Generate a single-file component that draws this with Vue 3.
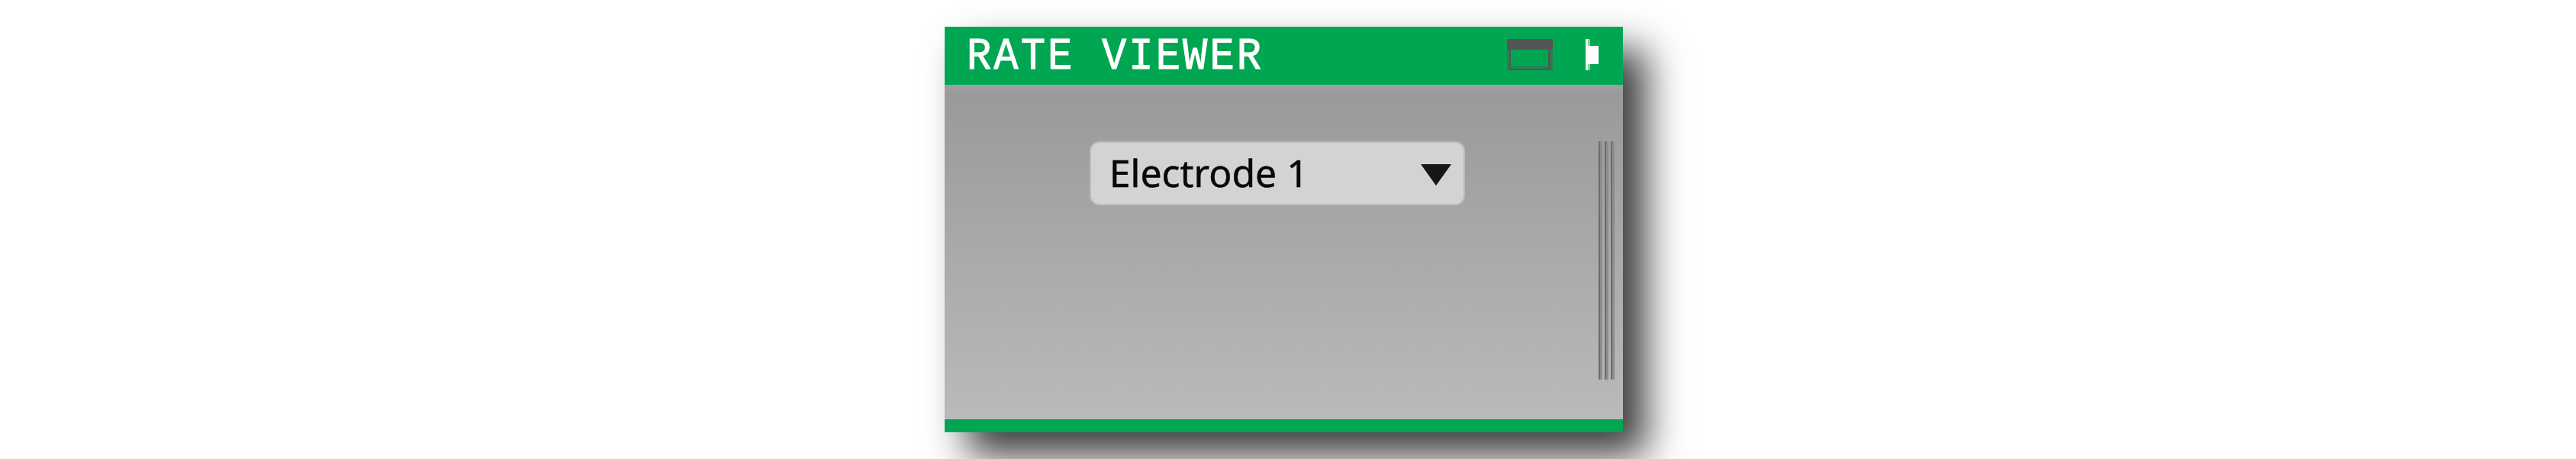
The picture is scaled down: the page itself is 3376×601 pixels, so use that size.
<script setup>
const title = 'RATE VIEWER'
const electrode = 'Electrode 1'
</script>

<template>
  <main class="stage">
    <section class="editor">
      <header class="bar">
        <svg class="title" width="400" height="76" viewBox="0 0 400 76">
          <text x="1" y="54.6" transform="scale(.92 1)">{{ title }}</text>
        </svg>
        <svg class="window-icon" width="60" height="41" viewBox="0 0 60 41" shape-rendering="crispEdges">
          <path d="M0 14H3V41H0ZM57 14H60V41H57ZM5 36H54V39H5Z" fill="#555" fill-opacity=".5" />
          <path d="M0 0H60V14H57V41H54V39H5V41H3V14H0ZM5 14V39H54V14Z" fill="#555" fill-rule="evenodd" />
          <path d="M5 39H54V41H5Z" fill="#555" />
        </svg>
        <svg class="tab-icon" width="17" height="41" viewBox="0 0 17 41" shape-rendering="crispEdges">
          <path d="M0 0H3V9H17V33H3V41H0Z" fill="#fff" />
          <path d="M3 0H6V9H3ZM3 33H6V41H3Z" fill="#fff" fill-opacity=".5" />
        </svg>
      </header>
      <div class="body">
        <div class="select">
          <svg class="label" width="270" height="80" viewBox="0 0 270 80">
            <text x="0.8" y="58" textLength="261" lengthAdjust="spacingAndGlyphs">{{ electrode }}</text>
          </svg>
          <svg class="arrow" width="40" height="28" viewBox="0 0 40 28">
            <path d="M0 0H40L20 28Z" fill="#171717" />
          </svg>
        </div>
        <div class="grip"><i></i><i></i><i></i></div>
      </div>
      <footer class="foot"></footer>
    </section>
  </main>
</template>

<style>
body {
  margin: 0;
  background: #fff;
}
</style>

<style scoped>
.stage {
  box-sizing: border-box;
  height: 601px;
  padding: 35px 0 0 1238px;
  overflow: hidden;
  background: #fff;
}
.editor {
  display: flex;
  flex-direction: column;
  width: 889px;
  height: 531px;
  box-shadow: 30px 30px 48px rgba(0, 0, 0, 0.77);
}
.bar {
  display: flex;
  height: 76px;
  background: #00a651;
}
.title {
  margin-left: 28px;
  font-family: 'Liberation Mono', monospace;
  font-size: 58.5px;
  letter-spacing: 3.38px;
  fill: #fff;
  stroke: #fff;
  stroke-width: 1px;
}
.window-icon {
  margin: 16px 0 0 309px;
}
.tab-icon {
  margin: 16px 0 0 43px;
}
.body {
  display: flex;
  flex: 1;
  align-items: flex-start;
  background: linear-gradient(#9f9f9f 0, #9a9a9a 14px, #bababa 100%);
}
.select {
  box-sizing: border-box;
  display: flex;
  flex: none;
  width: 492px;
  height: 84px;
  margin: 74px 0 0 190px;
  border: 2px solid #bcbcbc;
  border-radius: 13px;
  background: #d3d3d3;
}
.label {
  flex: none;
  margin-left: 23px;
  font-family: 'Noto Sans', sans-serif;
  font-size: 50px;
  fill: #080808;
  stroke: #080808;
  stroke-width: 0.5px;
}
.arrow {
  flex: none;
  margin: 28px 0 0 139px;
}
.grip {
  display: flex;
  gap: 3px;
  height: 312px;
  margin: 74px 0 0 175px;
}
.grip i {
  box-sizing: border-box;
  width: 5px;
  background: #8d8d8d;
  border-left: 2px solid #6b6b6b;
}
.foot {
  height: 17px;
  background: #00a651;
}
</style>
